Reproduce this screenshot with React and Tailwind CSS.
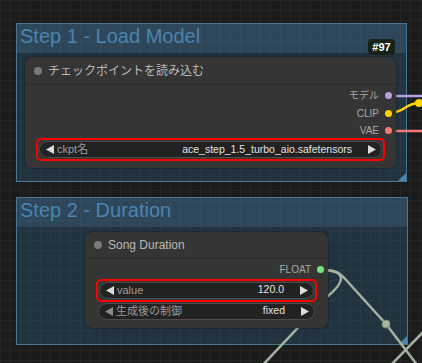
import React from 'react';

const font = "font-['Liberation_Sans','Noto_Sans_CJK_JP',sans-serif]";

const ArrowLeft = ({ className }) => (
  <svg width="8" height="9" viewBox="0 0 8 9" className={className}>
    <polygon points="8,0 8,9 0,4.5" fill="currentColor" />
  </svg>
);

const ArrowRight = ({ className }) => (
  <svg width="8" height="9" viewBox="0 0 8 9" className={className}>
    <polygon points="0,0 0,9 8,4.5" fill="currentColor" />
  </svg>
);

// Canvas group frame with title bar and a resize corner
const Group = ({ title, className }) => (
  <div className={`absolute flex flex-col border border-[#4a7696] ${className}`}>
    <div className="h-[29px] shrink-0 bg-[#3f7199]/50 pl-[3px] pt-[2px] text-[20px] leading-[20px] text-[#4a85b3]">
      {title}
    </div>
    <div className="flex-1 bg-[#326288]/35" />
    <svg width="8" height="8" viewBox="0 0 8 8" className="absolute bottom-0 right-0">
      <polygon points="8,0 8,8 0,8" fill="#4f86b0" />
    </svg>
  </div>
);

const Output = ({ label, color }) => (
  <div className="flex h-[17.5px] items-center justify-end gap-[6px] pr-[4px]">
    <span className="text-[10px] text-[#a9a9a9]">{label}</span>
    <span className={`h-[7px] w-[7px] rounded-full ${color}`} />
  </div>
);

const Pill = ({ label, value, dim, className = '' }) => (
  <div className={`flex h-[17px] items-center rounded-full border border-[#4d4d4d] bg-[#222222] pl-[6px] pr-[5px] text-[11px] ${className}`}>
    <ArrowLeft className={dim ? 'text-[#8a8a8a]' : 'text-[#dcdcdc]'} />
    <span className="ml-[3px] text-[#9c9c9c]">{label}</span>
    <span className="ml-auto mr-[16px] text-[10.5px] text-[#e2e2e2]">{value}</span>
    <ArrowRight className="text-[#dcdcdc]" />
  </div>
);

const NodeTitle = ({ children, h }) => (
  <div className={`flex ${h} items-center gap-[6px] border-b border-[#2c2c2c] pl-[9px] text-[12px] text-[#b9b9b9]`}>
    <span className="h-[8px] w-[8px] rounded-full bg-[#7a7a7a]" />
    {children}
  </div>
);

export default function App() {
  return (
    <div className={`relative h-[363px] w-[422px] overflow-hidden bg-[#1b1b1b] bg-[linear-gradient(to_right,#242424_1px,transparent_1px),linear-gradient(to_bottom,#242424_1px,transparent_1px)] bg-size-[10px_10px] ${font}`}>
      <Group title="Step 1 - Load Model" className="left-[16px] top-[23px] h-[159px] w-[391px]" />
      <Group title="Step 2 - Duration" className="left-[16px] top-[197px] h-[148px] w-[392px]" />

      {/* links */}
      <svg width="422" height="363" className="absolute inset-0">
        <path d="M389 96 L425 96" stroke="#b49fdc" strokeWidth="2.5" fill="none" />
        <path d="M389 113 C405 113 405 103 419 103 L425 103" stroke="#ffd500" strokeWidth="2.5" fill="none" />
        <circle cx="419" cy="103" r="4" fill="#ffd500" />
        <path d="M389 131 L425 131" stroke="#f27a7a" strokeWidth="2.5" fill="none" />
        <g stroke="#a3b3a0" strokeWidth="2.5" fill="none">
          <path d="M320 270 C348 270 345 282 328 296 L258 370" />
          <path d="M320 270 C338 270 340 273 347 281 L386 324 L418 366" />
          <path d="M390 366 L425 330" />
        </g>
        <circle cx="386" cy="324" r="4" fill="#a6b6a2" stroke="#7d8c7a" strokeWidth="1" />
      </svg>

      {/* node badge */}
      <div className="absolute left-[368px] top-[39px] flex h-[16px] w-[27px] items-center justify-center rounded-[4px] bg-[#162316] text-[11px] font-bold text-white">
        #97
      </div>

      {/* Load checkpoint node */}
      <div className="absolute left-[25px] top-[57px] h-[111px] w-[371px] rounded-[8px] bg-[#353535] shadow-[0_0_3px_rgba(0,0,0,0.5)]">
        <NodeTitle h="h-[28px]">チェックポイントを読み込む</NodeTitle>
        <div className="pt-[2px]">
          <Output label="モデル" color="bg-[#b49fdc]" />
          <Output label="CLIP" color="bg-[#ffd500]" />
          <Output label="VAE" color="bg-[#f27a7a]" />
          <div className="mx-[11px] mt-[-1.5px] rounded-[5px] border-2 border-[#ff0000] p-[1px]">
            <Pill label="ckpt名" value="ace_step_1.5_turbo_aio.safetensors" />
          </div>
        </div>
      </div>

      {/* Song duration node */}
      <div className="absolute left-[85px] top-[232px] h-[96px] w-[243px] rounded-[8px] bg-[#353535] shadow-[0_0_3px_rgba(0,0,0,0.5)]">
        <NodeTitle h="h-[27px]">Song Duration</NodeTitle>
        <div className="pt-[2px]">
          <Output label="FLOAT" color="bg-[#7be37b]" />
          <div className="mx-[11px] rounded-[5px] border-2 border-[#ff0000] p-[1px]">
            <Pill label="value" value="120.0" />
          </div>
          <Pill label="生成後の制御" value="fixed" dim className="mx-[13px] mt-[1px]" />
        </div>
      </div>
    </div>
  );
}
